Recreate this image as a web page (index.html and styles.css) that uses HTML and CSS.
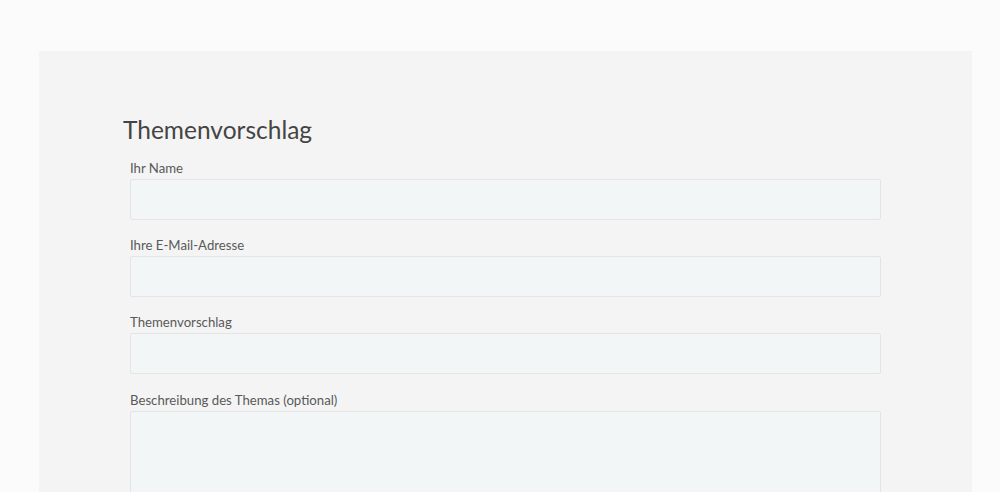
FILE: index.html
```html
<!DOCTYPE html>
<html lang="de">

<head>
    <meta charset="UTF-8">
    <meta name="viewport" content="width=device-width, initial-scale=1.0">
    <title>Themenvorschlag</title>
    <link rel="stylesheet" href="styles.css">
</head>

<body>
    <div class="page">
        <div class="card">
            <h2 class="title">Themenvorschlag</h2>
            <form class="form">
                <div class="field">
                    <label for="name">Ihr Name</label>
                    <input type="text" id="name">
                </div>
                <div class="field">
                    <label for="mail">Ihre E-Mail-Adresse</label>
                    <input type="email" id="mail">
                </div>
                <div class="field">
                    <label for="topic">Themenvorschlag</label>
                    <input type="text" id="topic">
                </div>
                <div class="field">
                    <label for="desc">Beschreibung des Themas (optional)</label>
                    <textarea id="desc"></textarea>
                </div>
            </form>
        </div>
    </div>
</body>

</html>
```

FILE: styles.css
```css
* {
    padding: 0;
    margin: 0;
    box-sizing: border-box;
}

body {
    background-color: #fbfbfb;
    font-family: Lato, "Noto Sans", sans-serif;
    color: #555;
}

.page {
    padding: 51px 28px 0 39px;
}

.card {
    width: 933px;
    padding: 64px 91px 40px 84px;
    background-color: #f4f4f4;
}

.title {
    font-size: 24.5px;
    font-weight: 400;
    line-height: 30px;
    color: #444;
    margin-bottom: 15px;
}

.form {
    padding-left: 7px;
}

.field {
    margin-bottom: 17.2px;
}

.field label {
    display: block;
    font-size: 13.2px;
    line-height: 16px;
    margin-bottom: 3px;
    color: #595959;
}

.field input,
.field textarea {
    display: block;
    width: 751px;
    height: 41px;
    background-color: #f3f6f7;
    border: 1px solid #e4e4e4;
    border-radius: 2px;
    font-family: inherit;
    font-size: 13px;
    outline: none;
}

.field textarea {
    height: 130px;
    resize: none;
}
```
